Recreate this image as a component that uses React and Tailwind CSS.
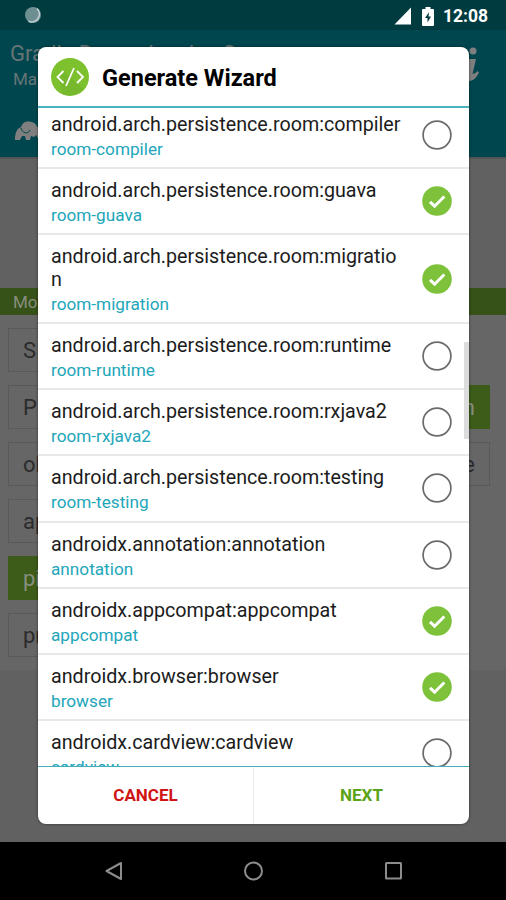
import React from 'react';
import clsx from 'clsx';

const libraries = [
  { group: 'android.arch.persistence.room:compiler', name: 'room-compiler', checked: false },
  { group: 'android.arch.persistence.room:guava', name: 'room-guava', checked: true },
  { group: 'android.arch.persistence.room:migration', name: 'room-migration', checked: true },
  { group: 'android.arch.persistence.room:runtime', name: 'room-runtime', checked: false },
  { group: 'android.arch.persistence.room:rxjava2', name: 'room-rxjava2', checked: false },
  { group: 'android.arch.persistence.room:testing', name: 'room-testing', checked: false },
  { group: 'androidx.annotation:annotation', name: 'annotation', checked: false },
  { group: 'androidx.appcompat:appcompat', name: 'appcompat', checked: true },
  { group: 'androidx.browser:browser', name: 'browser', checked: true },
  { group: 'androidx.cardview:cardview', name: 'cardview', checked: false },
];

const chipRows = [
  { left: 'S' },
  { left: 'P', right: 'n', rightActive: true },
  { left: 'ok', right: 'e' },
  { left: 'ap' },
  { left: 'pi', leftActive: true },
  { left: 'pr' },
];

const StatusBar = () => (
  <div className="flex h-[30px] items-center bg-[#003b40] pl-6 pr-[18px]">
    <svg width="18" height="18" viewBox="0 0 18 18">
      <circle cx="9" cy="9" r="8" fill="#6d8f92" />
      <path d="M13 2.500A7.800 7.800 0 0 1 4.500 15.300" fill="none" stroke="#c3d2d3" strokeWidth="1.500" />
    </svg>
    <div className="ml-auto flex items-center pt-0.5">
      <svg width="18" height="18" viewBox="0 0 18 18" fill="#fff">
        <path d="M17 .5V17.500H.5z" />
      </svg>
      <svg className="ml-2.5" width="12" height="19" viewBox="0 0 12 19">
        <path d="M3.500 0h5v2H11q1 0 1 1v15q0 1-1 1H1q-1 0-1-1V3q0-1 1-1h2.500z" fill="#fff" />
        <path d="M7 5L3 11h2.500v4.500L9 9.500H6.500z" fill="#003b40" />
      </svg>
      <span className="ml-[9px] text-[17.500px] font-bold leading-5 text-white">12:08</span>
    </div>
  </div>
);

const AppBar = () => (
  <div className="flex h-[127px] justify-between bg-[#00464e] pl-[10px] pr-[27px] text-[#667576]">
    <div className="flex flex-col">
      <span className="mt-[11px] text-[22px] leading-[26px]">Gradle Dependencies S</span>
      <span className="pl-[3px] text-[17px] leading-6">Ma</span>
      <svg className="ml-[4px] mt-[29px]" width="30" height="23" viewBox="0 0 30 23" fill="#7f7f7f">
        <path d="M1 20C1 14 2 9 7 7c1-4 4-6 8-5.500 4 .5 7 2 8 5 3 2 5 5 6 13.500h-4l-3-5-2 2-3-1-1 4h-4l-1-4-3 0-2 4z" />
        <path d="M7 8c1 5 7 7 9 2" fill="none" stroke="#00464e" strokeWidth="1" />
      </svg>
    </div>
    <svg className="mt-[17px]" width="18" height="35" viewBox="0 0 18 35" fill="#7f7f7f">
      <circle cx="12" cy="4" r="3.500" />
      <path d="M4 12h11l-3.500 15q3 0 5-3l1.500 1.500Q14 34 8 34q-6 0-4.500-6L6 15.500H3z" />
    </svg>
  </div>
);

const Chip = ({ label, active }) => (
  <span
    className={clsx(
      'flex h-[44px] items-center border px-[14px] text-[22px]',
      active ? 'border-[#3d5c1a] bg-[#3d5c1a] text-[#868e7e]' : 'border-[#595959] text-[#2b2b2b]',
    )}
  >
    {label}
  </span>
);

const Background = () => (
  <div className="flex h-[900px] flex-col bg-[#616161]">
    <StatusBar />
    <AppBar />
    <div className="h-[131px] border-t-2 border-[#555]" />
    <div className="h-[27px] bg-[#375218] pl-[13px] text-[17px] leading-[28px] text-[#868e7e]">Mo</div>
    <div className="flex h-[355px] flex-col gap-[13px] bg-[#666] pl-2 pr-4 pt-[13px]">
      {chipRows.map((row) => (
        <div key={row.left} className="flex justify-between">
          <Chip label={row.left} active={row.leftActive} />
          {row.right && <Chip label={row.right} active={row.rightActive} />}
        </div>
      ))}
    </div>
    <NavBar />
  </div>
);

const NavBar = () => (
  <div className="mt-auto flex h-[58px] items-center bg-black pl-[104px] pr-[103px]">
    <svg width="299" height="20" viewBox="0 0 299 20" fill="none" stroke="#8c8c8c" strokeWidth="2">
      <path d="M17 2v16L2.500 10z" strokeLinejoin="round" />
      <circle cx="149.500" cy="10" r="8.500" />
      <rect x="282" y="2" width="15" height="15.500" rx="0.500" />
    </svg>
  </div>
);

const CheckMark = ({ checked }) => (
  <svg className="-mt-[2px] shrink-0" width="30" height="30" viewBox="0 0 30 30" fill="none">
    {checked ? (
      <>
        <circle cx="15" cy="15" r="14.800" fill="#7dc23a" />
        <path d="M8 15.800l4.600 4.400L22.300 10.500" stroke="#fff" strokeWidth="3" />
      </>
    ) : (
      <circle cx="15" cy="15" r="13.900" stroke="#6b6b6b" strokeWidth="1.700" />
    )}
  </svg>
);

const LibraryRow = ({ group, name, checked }) => (
  <div className="flex shrink-0 items-center justify-between border-b-2 border-[#e8e8e8] pb-[8.100px] pl-[13px] pr-[17px] pt-[10px]">
    <div className="w-[352px]">
      <p className="break-all text-[19.700px] leading-[23px] text-[#1c1c1c]">{group}</p>
      <p className="pt-[3px] text-[17.200px] leading-5 text-[#22a6ba]">{name}</p>
    </div>
    <CheckMark checked={checked} />
  </div>
);

const WizardDialog = () => (
  <div className="absolute left-[38px] top-[47px] flex h-[777px] w-[431px] flex-col overflow-hidden rounded-[8px] bg-white shadow-[0_0_3px_rgba(0,0,0,0.5)]">
    <div className="flex h-[61px] shrink-0 items-center border-b-2 border-[#4db3c1] pl-[13px]">
      <svg width="38" height="38" viewBox="0 0 38 38" fill="none">
        <circle cx="19" cy="19" r="19" fill="#7dc12f" />
        <path d="M5.500 19l7-6.500L32 31a19 19 0 0 1-20 5.500L9 24z" fill="#6fb22b" opacity="0.5" />
        <path d="M12.500 13L6.500 19l6 6M26 13l6 6-6 6M23 10l-8 18" stroke="#fff" strokeWidth="1.800" />
      </svg>
      <h2 className="ml-[13px] pt-1 text-[23.500px] font-bold text-black">Generate Wizard</h2>
    </div>
    <div className="relative min-h-0 flex-1 overflow-hidden">
      <div className="-mt-[5px] flex flex-col">
        {libraries.map((lib) => (
          <LibraryRow key={lib.name} {...lib} />
        ))}
      </div>
      <div className="absolute right-0 top-[234px] h-[97px] w-[5px] bg-[#dcdcdc]" />
    </div>
    <div className="flex h-[58px] shrink-0 border-t border-[#45adbb] text-[17px] font-bold">
      <button className="flex-1 border-r border-[#ececec] pt-px text-[#d01414]">CANCEL</button>
      <button className="flex-1 pt-px text-[#5ba317]">NEXT</button>
    </div>
  </div>
);

const App = () => (
  <div className="relative h-[900px] w-[506px] overflow-hidden font-['Roboto',sans-serif]">
    <Background />
    <WizardDialog />
  </div>
);

export default App;
